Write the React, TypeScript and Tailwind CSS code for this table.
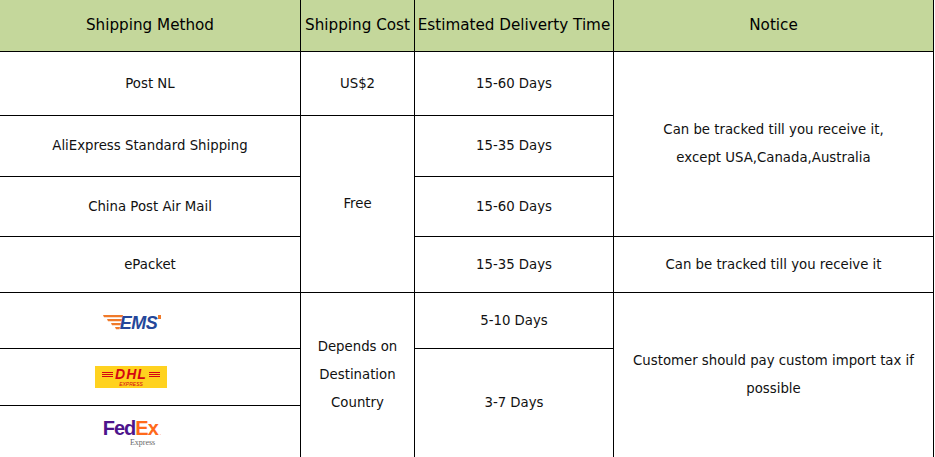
import React from "react";

const font = { fontFamily: '"DejaVu Sans", sans-serif' };

function Cell({ className = "", children }: { className?: string; children?: React.ReactNode }) {
  return (
    <div className={`bg-white flex items-center justify-center text-center text-[13.3px] leading-[28px] text-[#111] ${className}`}>
      {children}
    </div>
  );
}

function Head({ className = "", children }: { className?: string; children?: React.ReactNode }) {
  return (
    <div className={`bg-[#c4d79b] flex items-center justify-center text-[15.2px] text-black whitespace-nowrap ${className}`}>
      {children}
    </div>
  );
}

function EmsLogo() {
  return (
    <div className="flex items-center mt-[4px]">
      <svg width="20" height="15" viewBox="0 0 20 15">
        <polygon points="0,0 20,0 19.5,2.2 1,2.2" fill="#f07a2a" />
        <polygon points="4,4 19,4 18.5,6.2 5,6.2" fill="#f07a2a" />
        <polygon points="8,8 18,8 17.5,10.2 9,10.2" fill="#f07a2a" />
        <polygon points="12,12 17,12 16.5,14.2 13,14.2" fill="#f07a2a" />
      </svg>
      <span className="italic font-black text-[18px] leading-none text-[#24479a] tracking-[-0.5px] -ml-[3px]" style={{ fontFamily: '"Liberation Sans", sans-serif' }}>
        EMS
      </span>
      <span className="self-start w-[3px] h-[4px] bg-[#f07a2a] ml-[1px] mt-[1px]" />
    </div>
  );
}

function DhlLogo() {
  return (
    <div className="w-[72px] h-[22px] bg-[#ffd21f] flex flex-col items-center justify-center" style={{ fontFamily: '"Liberation Sans", sans-serif' }}>
      <div className="flex items-center gap-[2px]">
        <span className="flex flex-col gap-[1px]">
          <span className="w-[11px] h-[1px] bg-[#d40511]" />
          <span className="w-[11px] h-[1px] bg-[#d40511]" />
          <span className="w-[11px] h-[1px] bg-[#d40511]" />
        </span>
        <span className="italic font-black text-[14px] leading-none text-[#d40511] tracking-[1px]">DHL</span>
        <span className="flex flex-col gap-[1px]">
          <span className="w-[11px] h-[1px] bg-[#d40511]" />
          <span className="w-[11px] h-[1px] bg-[#d40511]" />
          <span className="w-[11px] h-[1px] bg-[#d40511]" />
        </span>
      </div>
      <span className="italic text-[5px] leading-none text-[#d40511] mt-[1px]">EXPRESS</span>
    </div>
  );
}

function FedexLogo() {
  return (
    <div className="flex flex-col items-end mt-[2px]" style={{ fontFamily: '"Liberation Sans", sans-serif' }}>
      <div className="flex items-end leading-none">
        <span className="font-bold text-[20px] text-[#4d148c] tracking-[-1px]">Fed</span>
        <span className="font-bold text-[20px] text-[#ff6a1a] tracking-[-1px]">Ex</span>
        <span className="text-[5px] text-[#ff6a1a] ml-[2px] mb-[2px]">.</span>
      </div>
      <span className="text-[8px] leading-none text-[#666] mr-[6px] mt-[1px]" style={{ fontFamily: '"Liberation Serif", serif' }}>Express</span>
    </div>
  );
}

export default function App() {
  return (
    <div className="w-[935px] h-[457px] bg-white" style={font}>
      <div className="grid grid-cols-[300px_113px_198px_319px] grid-rows-[51px_63px_60px_59px_55px_55px_56px_51px] gap-px bg-black pr-px w-[934px] h-[457px]">
        <Head className="col-start-1 row-start-1">Shipping Method</Head>
        <Head className="col-start-2 row-start-1">Shipping Cost</Head>
        <Head className="col-start-3 row-start-1">Estimated Deliverty Time</Head>
        <Head className="col-start-4 row-start-1">Notice</Head>

        <Cell className="col-start-1 row-start-2">Post NL</Cell>
        <Cell className="col-start-1 row-start-3">AliExpress Standard Shipping</Cell>
        <Cell className="col-start-1 row-start-4">China Post Air Mail</Cell>
        <Cell className="col-start-1 row-start-5">ePacket</Cell>
        <Cell className="col-start-1 row-start-6 pr-[36px]"><EmsLogo /></Cell>
        <Cell className="col-start-1 row-start-7 pr-[38px]"><DhlLogo /></Cell>
        <Cell className="col-start-1 row-start-8 pr-[36px]"><FedexLogo /></Cell>

        <Cell className="col-start-2 row-start-2">US$2</Cell>
        <Cell className="col-start-2 row-start-3 row-span-3">Free</Cell>
        <Cell className="col-start-2 row-start-6 row-span-3">
          <div>
            Depends on
            <br />
            Destination
            <br />
            Country
          </div>
        </Cell>

        <Cell className="col-start-3 row-start-2">15-60 Days</Cell>
        <Cell className="col-start-3 row-start-3">15-35 Days</Cell>
        <Cell className="col-start-3 row-start-4">15-60 Days</Cell>
        <Cell className="col-start-3 row-start-5">15-35 Days</Cell>
        <Cell className="col-start-3 row-start-6">5-10 Days</Cell>
        <Cell className="col-start-3 row-start-7 row-span-2">3-7 Days</Cell>

        <Cell className="col-start-4 row-start-2 row-span-3">
          <div>
            Can be tracked till you receive it,
            <br />
            except USA,Canada,Australia
          </div>
        </Cell>
        <Cell className="col-start-4 row-start-5">Can be tracked till you receive it</Cell>
        <Cell className="col-start-4 row-start-6 row-span-3">
          <div>
            Customer should pay custom import tax if
            <br />
            possible
          </div>
        </Cell>
      </div>
    </div>
  );
}
